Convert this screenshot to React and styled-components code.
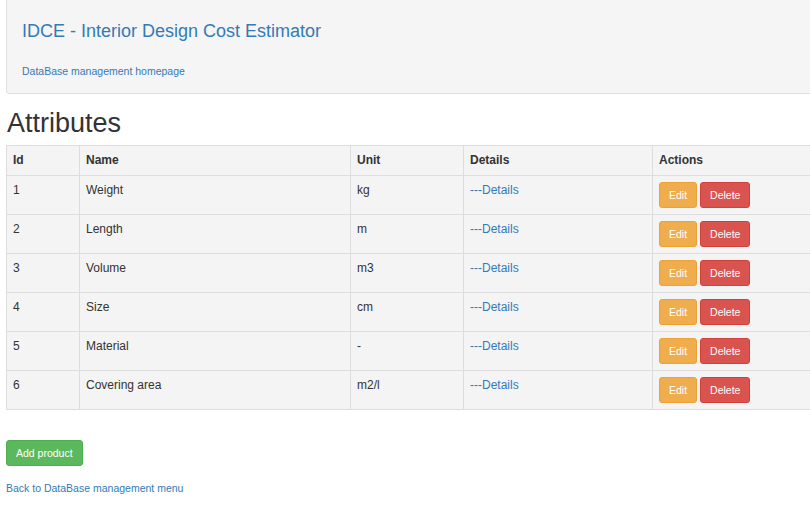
import styled, { createGlobalStyle } from "styled-components";

const GlobalStyle = createGlobalStyle`
  html, body {
    margin: 0;
    padding: 0;
    overflow: hidden;
    background: #fff;
    font-family: "Liberation Sans", Arial, sans-serif;
    color: #333;
  }
`;

const Page = styled.div`
  width: 870px;
  padding: 0 6px;
`;

const Header = styled.header`
  height: 94px;
  box-sizing: border-box;
  background: #f5f5f5;
  border: 1px solid #e0e0e0;
  border-top: none;
  border-bottom-left-radius: 4px;
  padding: 21px 15px 0;
`;

const Brand = styled.a`
  display: block;
  font-size: 18px;
  line-height: 20px;
  color: #337ab7;
  text-decoration: none;
`;

const SubLink = styled.a`
  display: block;
  margin-top: 23px;
  font-size: 10.5px;
  line-height: 15px;
  color: #337ab7;
  text-decoration: none;
`;

const Title = styled.h1`
  margin: 12px 0 5px 1px;
  font-size: 27px;
  font-weight: 500;
  line-height: 34px;
  color: #333;
`;

const Table = styled.table`
  border-collapse: collapse;
  table-layout: fixed;
  width: 860px;
  background: #f4f4f4;
  font-size: 12px;
  line-height: 17px;
`;

const Th = styled.th`
  width: ${(p) => p.$w}px;
  text-align: left;
  vertical-align: top;
  font-weight: bold;
  padding: 6px;
  border: 1px solid #ddd;
  color: #333;
`;

const Td = styled.td`
  vertical-align: top;
  padding: 6px;
  border: 1px solid #ddd;
  color: #333;
`;

const DetailsLink = styled.a`
  color: #337ab7;
  text-decoration: none;
`;

const Actions = styled.div`
  display: flex;
  gap: 3px;
`;

const Button = styled.button`
  height: 26px;
  padding: 0 9px;
  font-family: inherit;
  font-size: 10.5px;
  color: #fff;
  border: 1px solid ${(p) => p.$border};
  background: ${(p) => p.$bg};
  border-radius: 3px;
  cursor: pointer;
`;

const AddButton = styled(Button)`
  display: block;
  margin-top: 30px;
`;

const BackLink = styled.a`
  display: block;
  margin-top: 15px;
  font-size: 10.5px;
  line-height: 15px;
  color: #337ab7;
  text-decoration: none;
`;

const rows = [
  [1, "Weight", "kg"],
  [2, "Length", "m"],
  [3, "Volume", "m3"],
  [4, "Size", "cm"],
  [5, "Material", "-"],
  [6, "Covering area", "m2/l"],
];

export default function App() {
  return (
    <>
      <GlobalStyle />
      <Page>
        <Header>
          <Brand href="#">IDCE - Interior Design Cost Estimator</Brand>
          <SubLink href="#">DataBase management homepage</SubLink>
        </Header>
        <Title>Attributes</Title>
        <Table>
          <thead>
            <tr>
              <Th $w={60}>Id</Th>
              <Th $w={258}>Name</Th>
              <Th $w={100}>Unit</Th>
              <Th $w={176}>Details</Th>
              <Th $w={201}>Actions</Th>
            </tr>
          </thead>
          <tbody>
            {rows.map(([id, name, unit]) => (
              <tr key={id}>
                <Td>{id}</Td>
                <Td>{name}</Td>
                <Td>{unit}</Td>
                <Td>
                  <DetailsLink href="#">---Details</DetailsLink>
                </Td>
                <Td>
                  <Actions>
                    <Button $bg="#f0ad4e" $border="#eea236">Edit</Button>
                    <Button $bg="#d9534f" $border="#d43f3a">Delete</Button>
                  </Actions>
                </Td>
              </tr>
            ))}
          </tbody>
        </Table>
        <AddButton $bg="#5cb85c" $border="#4cae4c">Add product</AddButton>
        <BackLink href="#">Back to DataBase management menu</BackLink>
      </Page>
    </>
  );
}
